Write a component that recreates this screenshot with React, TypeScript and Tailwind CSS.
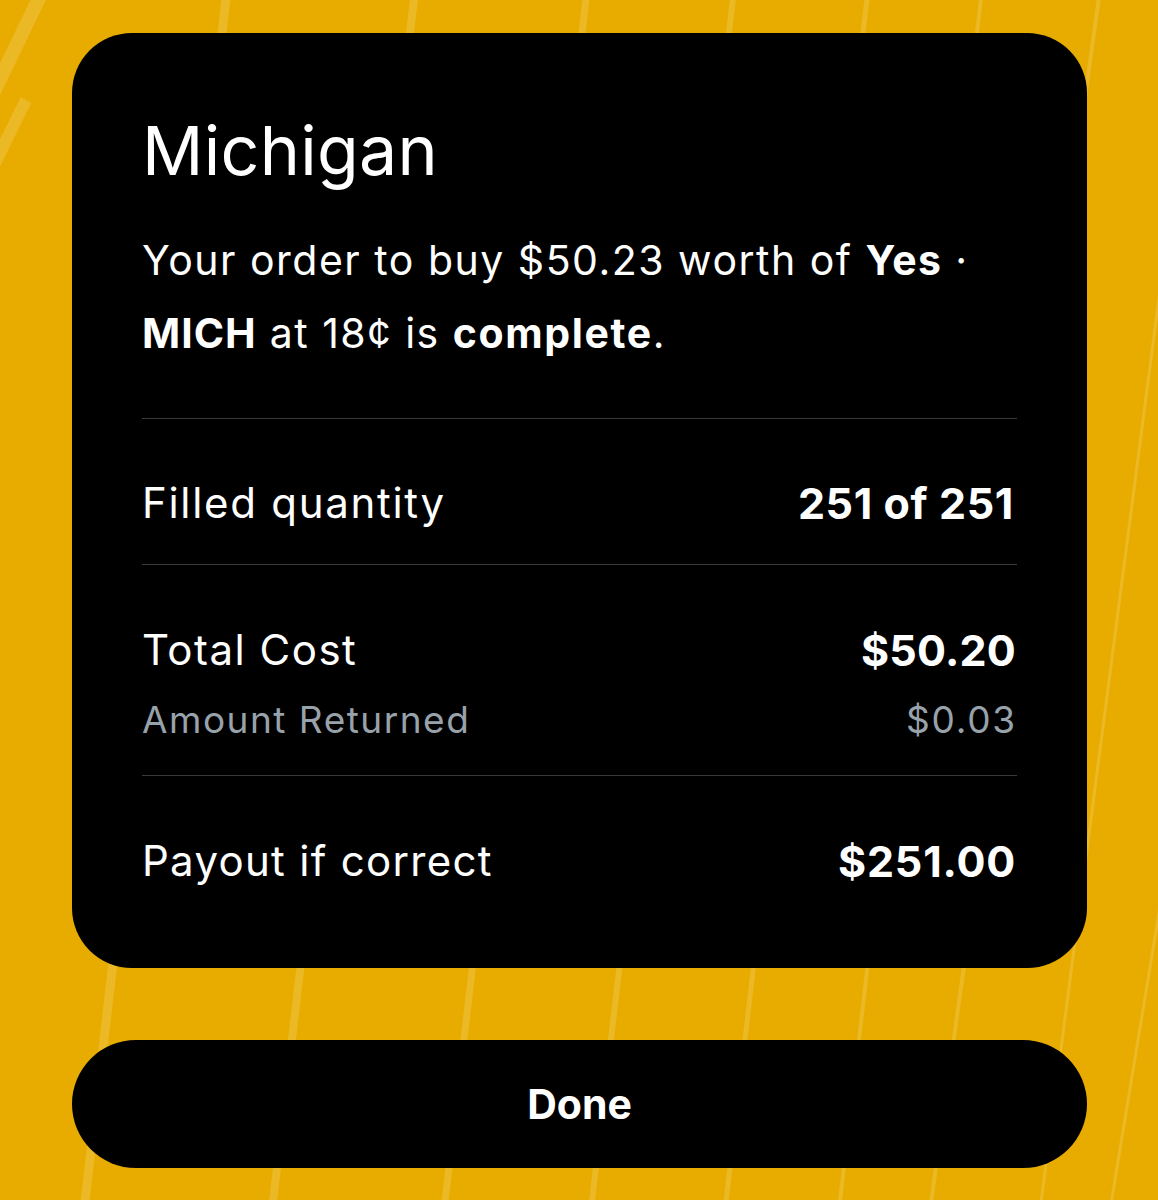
import React from "react";

const stripes: [number, number, number, number, number][] = [
  [43, -10, -10, 100, 14],
  [26, 100, -6, 165, 12],
  [227, -10, 84, 1210, 9],
  [415, -10, 272, 1210, 8],
  [587, -10, 444, 1210, 7],
  [734, -10, 591, 1210, 6],
  [868, -10, 725, 1210, 5],
  [982, -10, 839, 1210, 4],
  [1100, -10, 930, 1210, 4],
  [1190, 60, 1040, 1210, 3],
  [1260, 300, 1110, 1210, 3],
];

export default function App() {
  return (
    <div
      className="relative min-h-[1200px] w-full overflow-hidden bg-[#E8AC00]"
      style={{ fontFamily: "Inter, 'Noto Sans', sans-serif" }}
    >
      <svg
        className="pointer-events-none absolute inset-0"
        width="1158"
        height="1200"
        viewBox="0 0 1158 1200"
      >
        {stripes.map(([x1, y1, x2, y2, w], i) => (
          <line
            key={i}
            x1={x1}
            y1={y1}
            x2={x2}
            y2={y2}
            stroke="#ffffff"
            strokeOpacity={0.15}
            strokeWidth={w}
          />
        ))}
      </svg>

      <div className="relative flex flex-col pl-[72px] pr-[71px] pt-[33px]">
        <div className="rounded-[60px] bg-black pl-[70px] pr-[70px] pt-[77px] pb-[82px] text-white">
          <h1 className="text-[68px] leading-[80px] font-normal tracking-[0.3px]">Michigan</h1>
          <p className="mt-[34px] text-[41px] leading-[73px] font-normal tracking-[1.5px]">
            Your order to buy $50.23 worth of <span className="font-bold tracking-[1.3px]">Yes</span> ·{" "}
            <span className="font-bold tracking-[1px]">MICH</span> at 18¢ is{" "}
            <span className="font-bold tracking-[1.6px]">complete</span>.
          </p>

          <div className="mt-[48px] flex flex-col">
            <div className="flex items-center justify-between border-t border-[#3a3a3c] pt-[59px] pb-[36px]">
              <span className="text-[42px] leading-[50px] tracking-[1.7px]">Filled quantity</span>
              <span className="pr-[3px] text-[43px] leading-[50px] font-bold tracking-[0.6px]">251 of 251</span>
            </div>

            <div className="flex flex-col border-t border-[#3a3a3c] pt-[60px] pb-[33px]">
              <div className="flex items-center justify-between">
                <span className="text-[42px] leading-[50px] tracking-[1.5px]">Total Cost</span>
                <span className="pr-[1px] text-[43px] leading-[50px] font-bold tracking-[0.2px]">$50.20</span>
              </div>
              <div className="mt-[23px] flex items-center justify-between text-[#98a2aa]">
                <span className="text-[37px] leading-[44px] tracking-[1.5px]">Amount Returned</span>
                <span className="text-[37px] leading-[44px] tracking-[1.8px]">$0.03</span>
              </div>
            </div>

            <div className="flex items-center justify-between border-t border-[#3a3a3c] pt-[60px]">
              <span className="text-[42px] leading-[50px] tracking-[1.3px]">Payout if correct</span>
              <span className="pr-[1px] text-[43px] leading-[50px] font-bold tracking-[0.8px]">$251.00</span>
            </div>
          </div>
        </div>

        <button className="mt-[72px] flex h-[128px] items-center justify-center rounded-full bg-black text-white">
          <span className="text-[41px] font-bold leading-none">Done</span>
        </button>
      </div>
    </div>
  );
}
